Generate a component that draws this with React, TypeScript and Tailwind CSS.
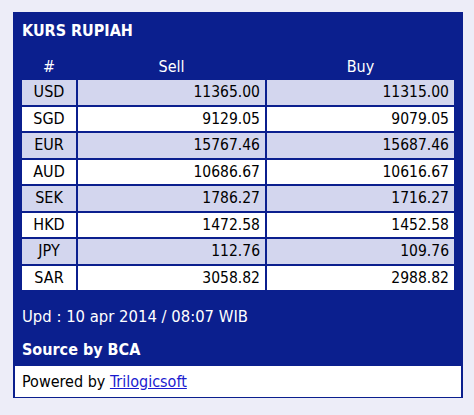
import React from "react";

const rows: [string, string, string][] = [
  ["USD", "11365.00", "11315.00"],
  ["SGD", "9129.05", "9079.05"],
  ["EUR", "15767.46", "15687.46"],
  ["AUD", "10686.67", "10616.67"],
  ["SEK", "1786.27", "1716.27"],
  ["HKD", "1472.58", "1452.58"],
  ["JPY", "112.76", "109.76"],
  ["SAR", "3058.82", "2988.82"],
];

export default function App() {
  return (
    <div
      className="w-[474px] h-[415px] bg-[#ededf8] pt-[12px] pl-[13px]"
      style={{ fontFamily: '"DejaVu Sans Condensed", "DejaVu Sans", sans-serif' }}
    >
      <div className="w-[450px] h-[386px] bg-[#0b1f8e] flex flex-col">
        <div className="h-[38px] pl-[9px] pt-[9px] text-white font-bold text-[16px] leading-[20px]">
          KURS RUPIAH
        </div>
        <div className="mx-[9px] grid grid-cols-[54px_187px_187px] gap-[2px] text-[16px]">
          <div className="h-[28px] pt-[7px] text-white text-center leading-[20px]">#</div>
          <div className="h-[28px] pt-[7px] text-white text-center leading-[20px]">Sell</div>
          <div className="h-[28px] pt-[7px] text-white text-center leading-[20px]">Buy</div>
          {rows.map((r, i) => {
            const bg = i % 2 === 0 ? "bg-[#d3d6ee]" : "bg-white";
            return (
              <React.Fragment key={r[0]}>
                <div className={`${bg} h-[24.5px] leading-[24.5px] text-center text-black`}>{r[0]}</div>
                <div className={`${bg} h-[24.5px] leading-[24.5px] text-right pr-[5px] text-black text-[15.5px]`}>{r[1]}</div>
                <div className={`${bg} h-[24.5px] leading-[24.5px] text-right pr-[5px] text-black text-[15.5px]`}>{r[2]}</div>
              </React.Fragment>
            );
          })}
        </div>
        <div className="pl-[9px] mt-[17px] text-white text-[16.5px] leading-[20px]">
          Upd : 10 apr 2014 / 08:07 WIB
        </div>
        <div className="pl-[9px] mt-[13px] text-white font-bold text-[16px] leading-[20px]">
          Source by BCA
        </div>
        <div className="mt-auto mx-[2px] mb-[1px] h-[31px] bg-white pl-[7px] text-[16px] leading-[31px] text-black">
          Powered by <a href="#" className="text-[#1a1ad0] underline">Trilogicsoft</a>
        </div>
      </div>
    </div>
  );
}
